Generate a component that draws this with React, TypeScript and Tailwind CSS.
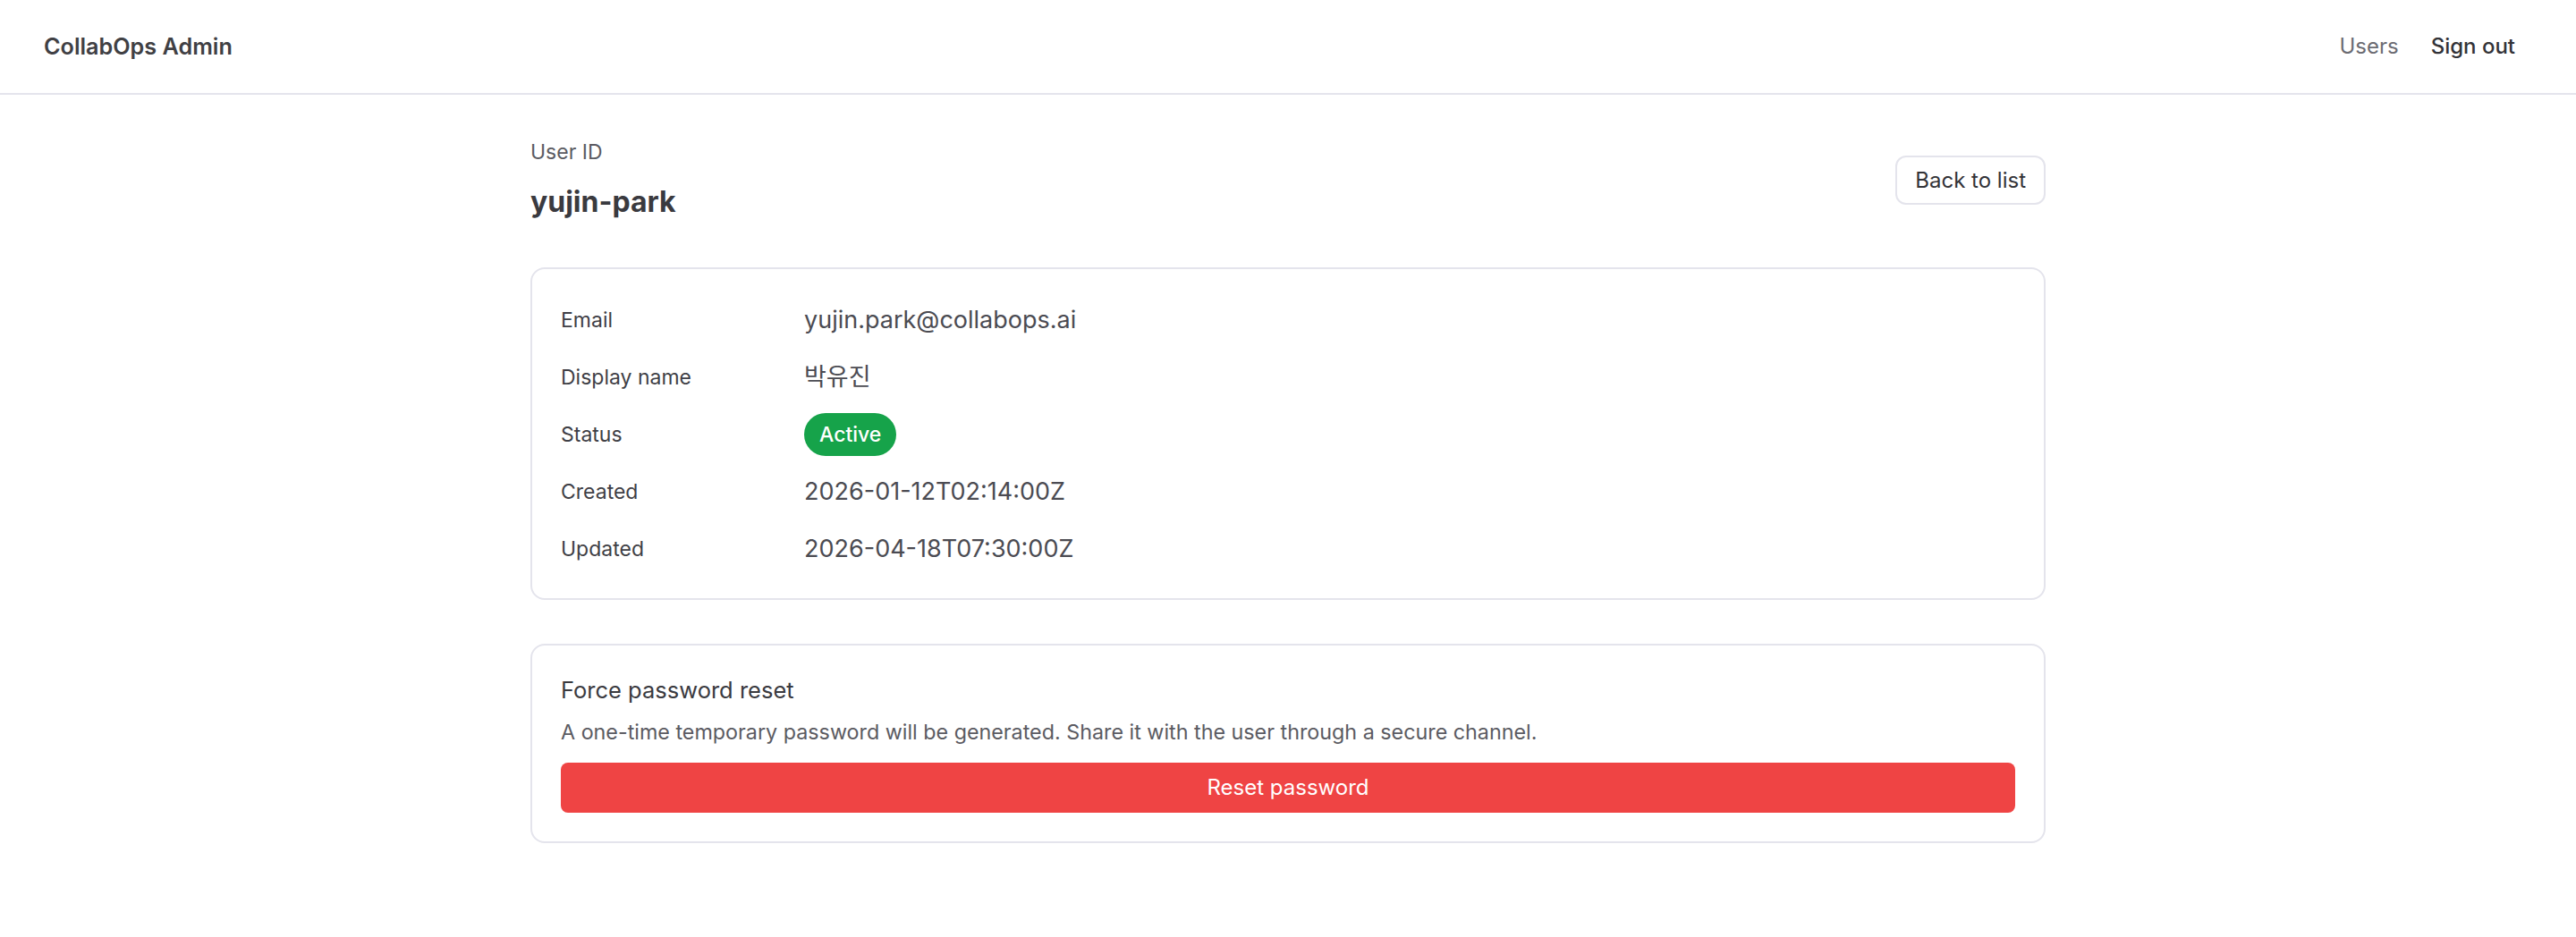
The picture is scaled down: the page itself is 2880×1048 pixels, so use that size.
import React from "react";

const rows: { label: string; value: React.ReactNode }[] = [
  { label: "Email", value: "yujin.park@collabops.ai" },
  { label: "Display name", value: "박유진" },
  {
    label: "Status",
    value: (
      <span className="inline-flex h-[48px] items-center rounded-full bg-[#16a34a] px-[17px] text-[23px] font-medium text-white">
        Active
      </span>
    ),
  },
  { label: "Created", value: "2026-01-12T02:14:00Z" },
  { label: "Updated", value: "2026-04-18T07:30:00Z" },
];

export default function App() {
  return (
    <div className="min-h-screen bg-white font-[Inter,'Noto_Sans_CJK_KR',sans-serif] text-[#3f3f46]">
      <header className="flex h-[106px] items-center justify-between border-b-2 border-[#e4e4ec] pl-[49px] pr-[48px]">
        <div className="mt-[2px] text-[25.2px] font-semibold text-[#404044]">CollabOps Admin</div>
        <nav className="flex items-center gap-[16px]">
          <a className="text-[24px] text-[#6b6b72]">Users</a>
          <button className="px-[20px] text-[24px] font-medium text-[#333338]">Sign out</button>
        </nav>
      </header>

      <main className="mx-auto w-[1694px] pt-[48px]">
        <div className="flex items-center justify-between">
          <div>
            <div className="text-[23px] leading-[32px] text-[#5b5b62]">User ID</div>
            <h1 className="mt-[20px] text-[32px] font-bold leading-[40px] text-[#3a3a3f]">yujin-park</h1>
          </div>
          <button className="mt-[3px] flex h-[55px] items-center rounded-[12px] border-2 border-[#e4e4ec] bg-white px-[20px] text-[24px] text-[#333338]">
            Back to list
          </button>
        </div>

        <section className="mt-[53px] rounded-[16px] border-2 border-[#e4e4ec] px-[32px] pb-[31px] pt-[33px]">
          <div className="flex flex-col gap-[16px]">
            {rows.map((r) => (
              <div key={r.label} className="flex min-h-[48px] items-center">
                <div className="w-[272px] shrink-0 text-[23px] leading-[32px] text-[#3f3f46]">{r.label}</div>
                <div className="text-[27px] leading-[40px] text-[#4b4b52]">{r.value}</div>
              </div>
            ))}
          </div>
        </section>

        <section className="mt-[49px] rounded-[16px] border-2 border-[#e4e4ec] px-[32px] py-[32px]">
          <h2 className="text-[25.5px] leading-[36px] text-[#3a3a3f]">Force password reset</h2>
          <p className="mt-[13px] text-[23.3px] leading-[32px] text-[#5b5b62]">
            A one-time temporary password will be generated. Share it with the user through a secure channel.
          </p>
          <button className="mt-[18px] flex h-[56px] w-full items-center justify-center rounded-[8px] bg-[#ef4444] text-[24px] text-white">
            Reset password
          </button>
        </section>
      </main>
    </div>
  );
}
